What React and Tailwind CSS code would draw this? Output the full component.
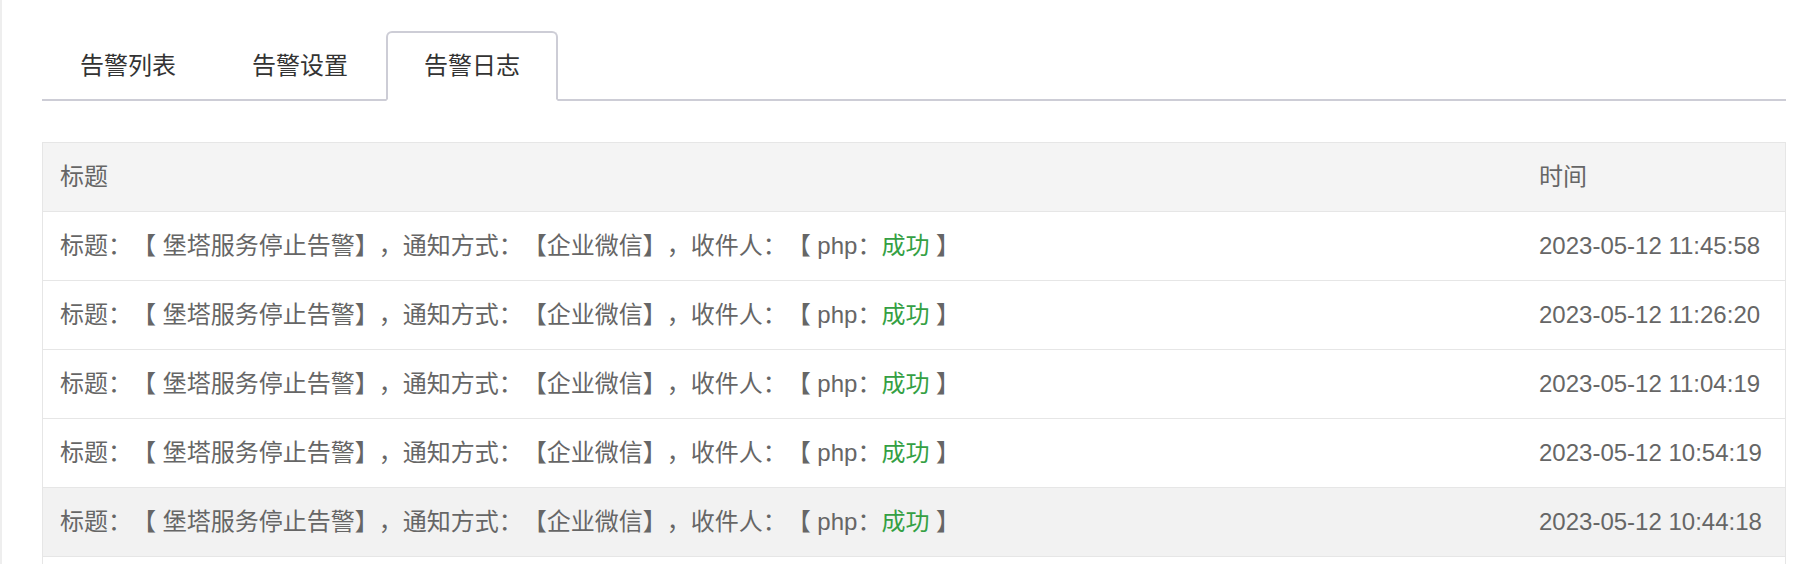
import { useState } from "react";

const tabs = ["告警列表", "告警设置", "告警日志"];

const logs = [
  "2023-05-12 11:45:58",
  "2023-05-12 11:26:20",
  "2023-05-12 11:04:19",
  "2023-05-12 10:54:19",
  "2023-05-12 10:44:18",
];

const LogRow = ({ time, hover }) => (
  <div
    className={`grid grid-cols-[1fr_264px] h-[69px] items-center border-b border-[#e6e6e6] ${
      hover ? "bg-[#f2f2f2]" : "bg-white"
    }`}
  >
    <div className="pl-[17px] whitespace-nowrap">
      标题：【 堡塔服务停止告警】，通知方式：【企业微信】，收件人：【 php：
      <span className="text-[#34a043]">成功</span> 】
    </div>
    <div className="pl-[18px] whitespace-nowrap">{time}</div>
  </div>
);

const App = () => {
  const [active, setActive] = useState(2);

  return (
    <div
      className="h-[564px] overflow-hidden bg-white flex text-[24px] text-[#666] [text-spacing-trim:space-all]"
      style={{ fontFamily: '"Liberation Sans", "Noto Sans CJK SC", sans-serif' }}
    >
      <div className="w-[2px] bg-[#eeeeee] shrink-0"></div>
      <div className="flex-1 pl-[40px] pr-[12px] pt-[31px]">
        {/* tabs */}
        <div className="flex border-b-2 border-[#cdcdd6] h-[70px]">
          {tabs.map((t, i) => (
            <button
              key={t}
              onClick={() => setActive(i)}
              className={`w-[172px] h-[70px] -mb-[2px] text-[#333] border-2 rounded-t-[6px] ${
                active === i
                  ? "border-[#cdcdd6] border-b-white bg-white"
                  : "border-transparent"
              }`}
            >
              {t}
            </button>
          ))}
        </div>

        {/* log table */}
        <div className="mt-[41px] border border-b-0 border-[#e6e6e6]">
          <div className="grid grid-cols-[1fr_264px] h-[69px] items-center bg-[#f4f4f4] border-b border-[#e6e6e6]">
            <div className="pl-[17px]">标题</div>
            <div className="pl-[18px]">时间</div>
          </div>
          {logs.map((time, i) => (
            <LogRow key={time} time={time} hover={i === 4} />
          ))}
          <div className="h-[69px] bg-white"></div>
        </div>
      </div>
    </div>
  );
};

export default App;
